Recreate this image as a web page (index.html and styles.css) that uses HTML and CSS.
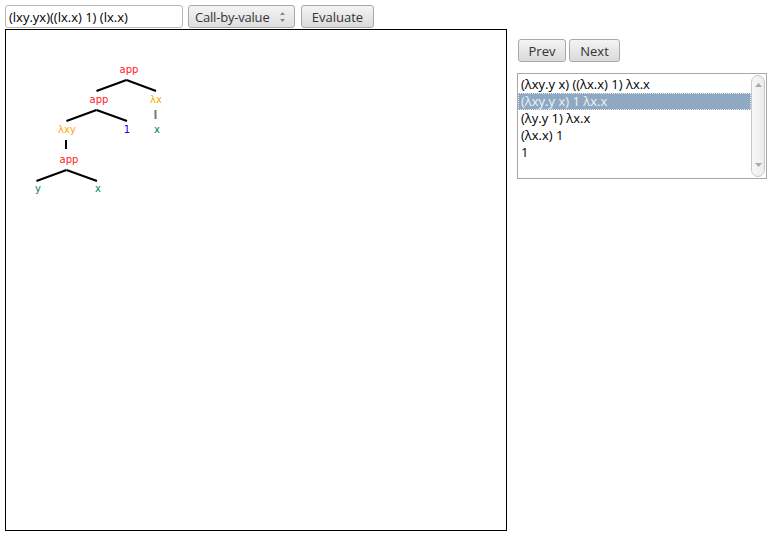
FILE: index.html
```html
<!DOCTYPE html>
<html>
<head>
<meta charset="utf-8">
<link rel="stylesheet" href="styles.css">
</head>
<body>
<div class="toolbar">
  <input class="expr" type="text" value="(lxy.yx)((lx.x) 1) (lx.x)">
  <div class="select">
    <span>Call-by-value</span>
    <svg class="spin" width="7" height="12" viewBox="0 0 7 12"><path d="M3.5 1 L6 4 L1 4 Z M1 8 L6 8 L3.5 11 Z" fill="#888"/></svg>
  </div>
  <button class="btn eval">Evaluate</button>
</div>
<div class="main">
  <div class="canvas">
    <svg class="tree" width="500" height="500" viewBox="0 0 500 500">
      <g stroke="#000" stroke-width="2">
        <line x1="120.5" y1="50" x2="90.5" y2="61"/>
        <line x1="120.5" y1="50" x2="150" y2="61"/>
        <line x1="90.5" y1="80" x2="60.5" y2="91"/>
        <line x1="90.5" y1="80" x2="121" y2="91"/>
        <line x1="60" y1="110" x2="60" y2="119"/>
        <line x1="60.5" y1="140" x2="30.5" y2="151"/>
        <line x1="60.5" y1="140" x2="91" y2="151"/>
      </g>
      <line x1="149.5" y1="80" x2="149.5" y2="89" stroke="#777" stroke-width="2"/>
      <g class="lbl" text-anchor="middle">
        <text x="123" y="43" class="app">app</text>
        <text x="93" y="73" class="app">app</text>
        <text x="150" y="73" class="lam">λx</text>
        <text x="61" y="103" class="lam">λxy</text>
        <text x="121" y="103" class="num">1</text>
        <text x="151" y="103" class="var">x</text>
        <text x="63" y="133" class="app">app</text>
        <text x="32" y="162" class="var">y</text>
        <text x="92" y="162" class="var">x</text>
      </g>
    </svg>
  </div>
  <div class="side">
    <div class="nav">
      <button class="btn prev">Prev</button>
      <button class="btn next">Next</button>
    </div>
    <div class="list">
      <div class="items">
        <div class="item">(λxy.y x) ((λx.x) 1) λx.x</div>
        <div class="item sel">(λxy.y x) 1 λx.x</div>
        <div class="item">(λy.y 1) λx.x</div>
        <div class="item">(λx.x) 1</div>
        <div class="item">1</div>
      </div>
      <div class="scroll">
        <svg width="7" height="4" viewBox="0 0 7 4"><path d="M3.5 0 L7 4 L0 4 Z" fill="#aaa"/></svg>
        <svg width="7" height="4" viewBox="0 0 7 4"><path d="M0 0 L7 0 L3.5 4 Z" fill="#aaa"/></svg>
      </div>
    </div>
  </div>
</div>
</body>
</html>
```

FILE: styles.css
```css
html, body {
  margin: 0;
  padding: 0;
  background: #fff;
}
body {
  padding: 5px;
  font-family: "Open Sans", "DejaVu Sans", sans-serif;
  font-size: 13px;
  color: #222;
}
.toolbar {
  display: flex;
  align-items: flex-start;
  height: 24px;
}
.expr {
  box-sizing: border-box;
  width: 178px;
  height: 23px;
  margin: 0;
  padding: 0 3px;
  border: 1px solid #b8b8b8;
  border-radius: 3px;
  font-family: inherit;
  font-size: 13px;
  color: #000;
  background: #fff;
  outline: none;
}
.select {
  box-sizing: border-box;
  width: 107px;
  height: 23px;
  margin-left: 5px;
  display: flex;
  align-items: center;
  justify-content: space-between;
  padding: 0 8px 0 6px;
  border: 1px solid #a8a8a8;
  border-radius: 3px;
  background: linear-gradient(#f4f4f4, #dedede);
  color: #333;
  letter-spacing: -0.2px;
}
.spin {
  display: block;
}
.btn {
  box-sizing: border-box;
  height: 23px;
  margin: 0;
  padding: 0;
  border: 1px solid #a8a8a8;
  border-radius: 3px;
  background: linear-gradient(#f4f4f4, #dadada);
  color: #333;
  font-family: inherit;
  font-size: 13px;
}
.eval {
  width: 73px;
  margin-left: 6px;
}
.main {
  display: flex;
  align-items: flex-start;
}
.canvas {
  width: 500px;
  height: 500px;
  border: 1px solid #000;
}
.tree {
  display: block;
}
.lbl text {
  font-family: "DejaVu Sans", sans-serif;
  font-size: 10px;
}
.app { fill: #ff2020; }
.lam { fill: #ffa500; }
.num { fill: #0000ff; }
.var { fill: #00805a; }
.side {
  margin-left: 10px;
  padding-top: 10px;
  display: flex;
  flex-direction: column;
}
.nav {
  display: flex;
  gap: 3px;
  margin-left: 1px;
}
.prev { width: 48px; }
.next { width: 51px; }
.list {
  box-sizing: border-box;
  margin-top: 11px;
  width: 250px;
  height: 106px;
  border: 1px solid #a8a8a8;
  display: flex;
  padding: 1px 1px 1px 0;
}
.items {
  flex: 1;
  padding-top: 1px;
}
.item {
  height: 17px;
  line-height: 17px;
  padding-left: 3px;
  color: #000;
  white-space: nowrap;
}
.item.sel {
  background: #8fa9c3;
  color: #eef2f6;
  outline: 1px dotted #e8e8e8;
  outline-offset: -1px;
}
.scroll {
  box-sizing: border-box;
  width: 14px;
  border: 1px solid #c8c8c8;
  border-radius: 7px;
  background: linear-gradient(90deg, #f8f8f8, #ececec);
  display: flex;
  flex-direction: column;
  justify-content: space-between;
  align-items: center;
  padding: 7px 0 9px;
}
.scroll svg {
  display: block;
}
```
